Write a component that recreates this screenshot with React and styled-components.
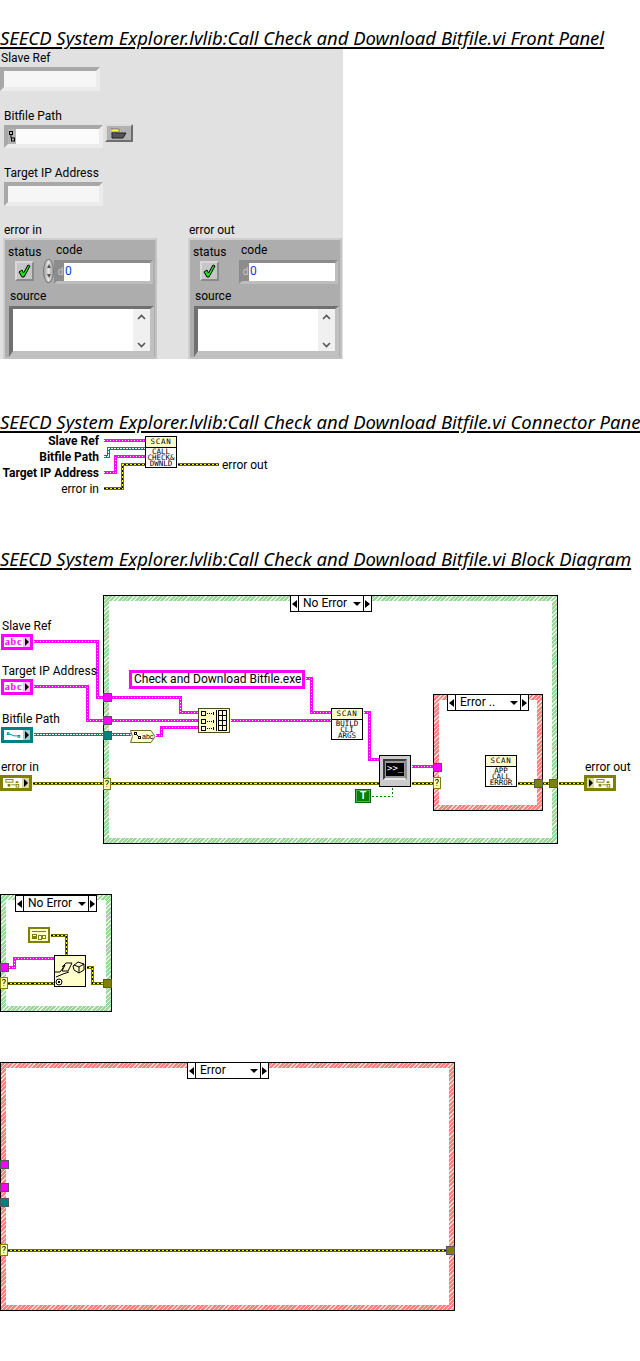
import React from 'react';
import styled, { createGlobalStyle, css } from 'styled-components';

const GlobalStyle = createGlobalStyle`
  html, body {
    margin: 0;
    padding: 0;
    background: #fff;
    font-family: Roboto, 'Noto Sans', sans-serif;
    color: #000;
  }
`;

const PINK = '#ff00ff';
const TEAL = '#008080';
const OLIVE = '#808000';

const place = css`
  position: absolute;
  left: ${(p) => p.$x}px;
  top: ${(p) => p.$y}px;
`;

const Page = styled.div`
  width: 640px;
  height: 1361px;
  overflow: hidden;
`;

const Title = styled.h2`
  margin: ${(p) => p.$gap}px 0 0;
  font-family: 'Noto Sans', sans-serif;
  font-size: 18.5px;
  line-height: 20px;
  font-weight: 400;
  font-style: italic;
  white-space: nowrap;
  text-decoration: underline;
  text-decoration-thickness: 2px;
  text-underline-offset: 2px;
`;

/* ---- front panel ---- */

const Panel = styled.section`
  width: 343px;
  height: 311px;
  background: #e1e1e1;
  overflow: hidden;
`;

const Field = styled.div`
  margin: ${(p) => p.$top}px 0 0 ${(p) => p.$left}px;
  display: flex;
  flex-direction: column;
`;

const Label = styled.span`
  display: block;
  font-size: 12px;
  line-height: 17px;
  height: 17px;
  white-space: nowrap;
  margin-left: ${(p) => p.$left || 0}px;
`;

const InputRow = styled.div`
  display: flex;
  align-items: flex-start;
  gap: 2px;
`;

const Recessed = styled.div`
  box-sizing: border-box;
  width: ${(p) => p.$w}px;
  height: ${(p) => p.$h}px;
  border: 4px solid;
  border-color: #a8a8a8 #ececec #ececec #a8a8a8;
  background: #f6f6f6;
  display: flex;
`;

const PathTag = styled.div`
  width: 8px;
  background: #b4b4b4;
  display: flex;
  align-items: center;
  justify-content: center;
`;

const PathText = styled.div`
  flex: 1;
  background: #fbfbfb;
`;

const BrowseButton = styled.button`
  box-sizing: border-box;
  width: 28px;
  height: 18px;
  margin-top: -1px;
  padding: 0;
  border: 2px solid;
  border-color: #dcdcdc #6e6e6e #6e6e6e #dcdcdc;
  background: #b2b2b2;
  display: flex;
  align-items: center;
  justify-content: center;
`;

const ClusterRow = styled.div`
  margin: 16px 0 0 3px;
  display: flex;
  gap: 31px;
`;

const ClusterColumn = styled.div`
  display: flex;
  flex-direction: column;
`;

const Cluster = styled.div`
  box-sizing: border-box;
  width: 154px;
  height: 121px;
  margin-top: -1px;
  border: 2px solid;
  border-color: #cfcfcf #c2c2c2 #c2c2c2 #cfcfcf;
  background: #adadad;
`;

const ClusterTop = styled.div`
  display: flex;
  height: 48px;
`;

const StatusColumn = styled.div`
  width: 38px;
  padding: 4px 0 0 3px;
  box-sizing: border-box;
  display: flex;
  flex-direction: column;
`;

const SpinnerSlot = styled.div`
  width: 11px;
  padding-top: 19px;
  flex: none;
`;

const CodeColumn = styled.div`
  padding-top: 2px;
  display: flex;
  flex-direction: column;
`;

const StatusButton = styled.div`
  box-sizing: border-box;
  width: 19px;
  height: 20px;
  margin-left: 7px;
  border: 2px solid;
  border-color: #d8d8d8 #8a8a8a #8a8a8a #d8d8d8;
  background: #c6c6c6;
  display: flex;
  align-items: center;
  justify-content: center;
`;

const Spinner = styled.div`
  width: 11px;
  height: 24px;
  border: 1px solid #7a7a7a;
  border-radius: 50%;
  background: linear-gradient(90deg, #a0a0a0, #e4e4e4 50%, #a0a0a0);
  display: flex;
  flex-direction: column;
  align-items: center;
  justify-content: space-between;
  padding: 4px 0;
  box-sizing: border-box;
`;

const SpinArrow = styled.i`
  width: 0;
  height: 0;
  border-left: 2px solid transparent;
  border-right: 2px solid transparent;
  ${(p) => (p.$down ? 'border-top: 4px solid #555;' : 'border-bottom: 4px solid #555;')}
`;

const NumericBox = styled.div`
  box-sizing: border-box;
  width: 99px;
  height: 24px;
  margin-top: 1px;
  border: 3px solid;
  border-color: #8c8c8c #bdbdbd #bdbdbd #8c8c8c;
  display: flex;
`;

const Radix = styled.span`
  width: 7px;
  background: #8c8c8c;
  color: #c9c9c9;
  font-size: 10px;
  line-height: 17px;
  text-align: center;
`;

const NumericValue = styled.span`
  flex: 1;
  background: #fff;
  color: #0a3ccf;
  font-size: 12px;
  line-height: 17px;
  padding-left: 1px;
`;

const SourceBox = styled.div`
  box-sizing: border-box;
  width: 145px;
  height: 51px;
  margin: 1px 0 0 4px;
  border: 3px solid;
  border-color: #707070 #c0c0c0 #c0c0c0 #707070;
  border-width: 3px 4px 6px 4px;
  background: #fff;
  display: flex;
  justify-content: flex-end;
`;

const ScrollBar = styled.div`
  width: 17px;
  background: #f0f0f0;
  display: flex;
  flex-direction: column;
  align-items: center;
  justify-content: space-between;
  padding: 5px 0 3px;
  box-sizing: border-box;
`;

const Chevron = ({ flip }) => (
  <svg width="9" height="6" viewBox="0 0 9 6">
    <polyline
      points={flip ? '1,1 4.5,4.5 8,1' : '1,5 4.5,1.5 8,5'}
      fill="none"
      stroke="#555"
      strokeWidth="1.6"
    />
  </svg>
);

const CheckMark = () => (
  <svg width="13" height="14" viewBox="0 0 13 14">
    <path
      d="M1 8 L4 6 L5.5 9 L10 1 L12 2 L6 13 L4 13 Z"
      fill="#1fe01f"
      stroke="#000"
      strokeWidth="1"
    />
  </svg>
);

const FolderIcon = () => (
  <svg width="16" height="11" viewBox="0 0 16 11">
    <path d="M1 3 L1 10 L12 10 L15 5 L5 5 L3 3 Z" fill="#555" stroke="#222" />
    <path d="M0 0 L1 0 L1 1 L8 1 L8 4 L1 4 L1 5 L0 5 Z" fill="#ffff20" stroke="#555" strokeWidth="0.6" />
  </svg>
);

const PathGlyph = () => (
  <svg width="6" height="11" viewBox="0 0 6 11">
    <rect x="0.5" y="0.5" width="3" height="3" fill="none" stroke="#000" />
    <line x1="2" y1="4" x2="2" y2="7" stroke="#000" />
    <rect x="2.5" y="7" width="3" height="3" fill="none" stroke="#000" />
  </svg>
);

const ErrorCluster = ({ title, control }) => (
  <ClusterColumn>
    <Label $left={1}>{title}</Label>
    <Cluster>
      <ClusterTop>
        <StatusColumn>
          <Label>status</Label>
          <StatusButton>
            <CheckMark />
          </StatusButton>
        </StatusColumn>
        <SpinnerSlot>
          {control && (
            <Spinner>
              <SpinArrow />
              <SpinArrow $down />
            </Spinner>
          )}
        </SpinnerSlot>
        <CodeColumn>
          <Label $left={2}>code</Label>
          <NumericBox>
            <Radix>d</Radix>
            <NumericValue>0</NumericValue>
          </NumericBox>
        </CodeColumn>
      </ClusterTop>
      <Label $left={5}>source</Label>
      <SourceBox>
        <ScrollBar>
          <Chevron />
          <Chevron flip />
        </ScrollBar>
      </SourceBox>
    </Cluster>
  </ClusterColumn>
);

/* ---- diagrams ---- */

const Canvas = styled.div`
  position: relative;
  width: 640px;
  height: ${(p) => p.$h}px;
  margin-top: ${(p) => p.$gap}px;
`;

const WireLayer = styled.svg`
  position: absolute;
  left: 0;
  top: 0;
  z-index: 3;
  pointer-events: none;
`;

const Trace = styled.polyline`
  fill: none;
  stroke: ${(p) => p.$c};
  stroke-width: ${(p) => p.$w}px;
  stroke-dasharray: ${(p) => p.$dash || 'none'};
  shape-rendering: crispEdges;
`;

const WIRES = {
  string: [
    { c: PINK, w: 3 },
    { c: '#fff', w: 1, dash: '1 2' },
  ],
  path: [
    { c: TEAL, w: 3 },
    { c: '#fff', w: 1, dash: '2 1' },
  ],
  error: [
    { c: '#6f6f00', w: 3 },
    { c: '#ffff00', w: 1 },
    { c: '#000', w: 1, dash: '2 2' },
  ],
  bool: [{ c: '#008000', w: 1, dash: '2 2' }],
};

const Wire = ({ kind, points }) =>
  WIRES[kind].map((layer, i) => (
    <Trace key={i} points={points} $c={layer.c} $w={layer.w} $dash={layer.dash} />
  ));

const Wires = ({ top, height, list }) => (
  <WireLayer width="640" height={height} viewBox={`0 ${top} 640 ${height}`}>
    <g transform="translate(0.5 0.5)">
      {list.map(([kind, points]) => (
        <Wire key={points} kind={kind} points={points} />
      ))}
    </g>
  </WireLayer>
);

const NodeLabel = styled.span`
  ${place}
  font-size: 12px;
  line-height: 16px;
  white-space: nowrap;
`;

const PaneLabels = styled.div`
  width: 99px;
  padding-top: 1px;
  display: flex;
  flex-direction: column;
  align-items: flex-end;
`;

const PaneLabel = styled.span`
  font-size: 12px;
  line-height: 16px;
  font-weight: ${(p) => (p.$bold ? 700 : 400)};
  white-space: nowrap;
`;

const IconNode = styled.div`
  ${place}
  z-index: 4;
  box-sizing: border-box;
  width: 32px;
  height: 32px;
  border: 1px solid #000;
  background: #fff;
  display: flex;
  flex-direction: column;
  font-family: 'DejaVu Sans Mono', 'Liberation Mono', monospace;
  font-size: 7.5px;
  line-height: 6px;
  text-align: center;
`;

const IconHead = styled.div`
  height: 10px;
  line-height: 10px;
  letter-spacing: 0.7px;
  background: #ffffcc;
  border-bottom: 1px solid #000;
  flex: none;
`;

const IconBody = styled.div`
  display: flex;
  flex-direction: column;
  justify-content: center;
  flex: 1;
  white-space: nowrap;
`;

const ScanNode = ({ x, y, lines }) => (
  <IconNode $x={x} $y={y}>
    <IconHead>SCAN</IconHead>
    <IconBody>
      {lines.map((line) => (
        <div key={line}>{line}</div>
      ))}
    </IconBody>
  </IconNode>
);

const CaseFrame = styled.div`
  ${place}
  z-index: 1;
  box-sizing: border-box;
  width: ${(p) => p.$w}px;
  height: ${(p) => p.$h}px;
  border: 1px solid #000;
  padding: 5px;
  background: repeating-linear-gradient(
    -45deg,
    ${(p) => (p.$error ? '#ff8080' : '#9ad89a')} 0 2px,
    ${(p) => (p.$error ? '#ffd8d8' : '#e8f6e8')} 2px 3px
  );
`;

const CaseInner = styled.div`
  width: 100%;
  height: 100%;
  background: #fff;
`;

const Selector = styled.div`
  ${place}
  z-index: 2;
  box-sizing: border-box;
  width: 82px;
  height: 17px;
  border: 1px solid #000;
  background: #fff;
  display: flex;
  font-size: 12px;
  line-height: 15px;
`;

const SelectorStep = styled.div`
  width: 7px;
  flex: none;
  display: flex;
  align-items: center;
  justify-content: center;
  ${(p) => (p.$right ? 'border-left: 1px solid #000;' : 'border-right: 1px solid #000;')}
`;

const StepArrow = styled.i`
  width: 0;
  height: 0;
  border-top: 4px solid transparent;
  border-bottom: 4px solid transparent;
  ${(p) => (p.$right ? 'border-left: 5px solid #000;' : 'border-right: 5px solid #000;')}
`;

const SelectorText = styled.div`
  flex: 1;
  display: flex;
  align-items: center;
  justify-content: space-between;
  padding: 0 2px 0 4px;
  white-space: nowrap;
`;

const DropArrow = styled.i`
  width: 0;
  height: 0;
  border-left: 4px solid transparent;
  border-right: 4px solid transparent;
  border-top: 4px solid #000;
`;

const CaseSelector = ({ x, y, text }) => (
  <Selector $x={x} $y={y}>
    <SelectorStep>
      <StepArrow />
    </SelectorStep>
    <SelectorText>
      {text}
      <DropArrow />
    </SelectorText>
    <SelectorStep $right>
      <StepArrow $right />
    </SelectorStep>
  </Selector>
);

const Tunnel = styled.div`
  ${place}
  z-index: 5;
  box-sizing: border-box;
  width: 9px;
  height: 9px;
  background: ${(p) => p.$c};
  border: 1px solid ${(p) => p.$edge || '#555'};
`;

const CaseTerminal = styled.div`
  ${place}
  z-index: 5;
  box-sizing: border-box;
  width: 8px;
  height: 12px;
  background: #ffffb0;
  border: 1px solid #808000;
  font-size: 9px;
  line-height: 10px;
  text-align: center;
`;

const LabeledTerminal = styled.div`
  ${place}
  z-index: 4;
  display: flex;
  flex-direction: column;
`;

const TerminalLabel = styled.span`
  font-size: 12px;
  line-height: 16px;
  margin-left: 1px;
  white-space: nowrap;
`;

const TerminalBox = styled.div`
  box-sizing: border-box;
  width: 32px;
  height: 16px;
  border: 3px solid ${(p) => p.$c};
  background: #fff;
  display: flex;
  flex-direction: ${(p) => (p.$indicator ? 'row-reverse' : 'row')};
`;

const TerminalFace = styled.div`
  flex: 1;
  display: flex;
  align-items: center;
  justify-content: center;
  font-family: 'Liberation Serif', serif;
  font-size: 10px;
  font-weight: 700;
  letter-spacing: 0.8px;
  line-height: 8px;
  color: ${(p) => p.$c};
`;

const TerminalFlap = styled.div`
  width: 7px;
  background: ${(p) => p.$tint};
  display: flex;
  align-items: center;
  justify-content: center;
`;

const FlapArrow = styled.i`
  width: 0;
  height: 0;
  border-top: 4px solid transparent;
  border-bottom: 4px solid transparent;
  border-left: 4px solid #000;
`;

const Terminal = ({ x, y, label, c, tint, indicator, children }) => (
  <LabeledTerminal $x={x} $y={y}>
    <TerminalLabel>{label}</TerminalLabel>
    <TerminalBox $c={c} $indicator={indicator}>
      <TerminalFace $c={c}>{children}</TerminalFace>
      <TerminalFlap $tint={tint}>
        <FlapArrow />
      </TerminalFlap>
    </TerminalBox>
  </LabeledTerminal>
);

const ClusterGlyph = () => (
  <svg width="16" height="9" viewBox="0 0 18 9">
    <rect x="1" y="0" width="8" height="3" fill="none" stroke="#808000" />
    <rect x="3" y="5" width="3" height="3" fill="#808000" />
    <line x1="7" y1="6" x2="12" y2="6" stroke="#808000" />
    <rect x="12" y="2" width="3" height="2" fill="#808000" />
    <rect x="12.5" y="5.5" width="3" height="3" fill="none" stroke="#808000" />
  </svg>
);

const PathWireGlyph = () => (
  <svg width="16" height="8" viewBox="0 0 18 8">
    <rect x="1.5" y="1.5" width="2" height="2" fill="none" stroke={TEAL} />
    <line x1="4" y1="3" x2="9" y2="5" stroke={TEAL} />
    <line x1="9" y1="5" x2="13" y2="5" stroke={TEAL} />
    <rect x="13.5" y="4.5" width="2" height="2" fill="none" stroke={TEAL} />
  </svg>
);

const AbsoluteIcon = styled.svg`
  ${place}
  z-index: 4;
`;

const BuildArrayNode = ({ x, y }) => (
  <AbsoluteIcon $x={x} $y={y} width="32" height="25" viewBox="0 0 32 25">
    <rect x="0.5" y="0.5" width="31" height="24" fill="#ffffcc" stroke="#4a4a20" />
    {[3, 11, 18].map((t) => (
      <g key={t} stroke="#000" fill="none" shapeRendering="crispEdges">
        <rect x="3.5" y={t + 0.5} width="4" height="4" />
        <line x1="9" y1={t + 2.5} x2="16" y2={t + 2.5} strokeDasharray="1 1" />
        <line x1="15.5" y1={t + 1} x2="15.5" y2={t + 4} />
      </g>
    ))}
    <g stroke="#000" fill="none" shapeRendering="crispEdges">
      <line x1="18.5" y1="2" x2="18.5" y2="23" />
      <rect x="20.5" y="2.5" width="8" height="20" />
      <line x1="24.5" y1="3" x2="24.5" y2="22" />
      <line x1="21" y1="7.5" x2="28" y2="7.5" />
      <line x1="21" y1="12.5" x2="28" y2="12.5" />
      <line x1="21" y1="17.5" x2="28" y2="17.5" />
    </g>
  </AbsoluteIcon>
);

const PathToStringNode = ({ x, y }) => (
  <AbsoluteIcon $x={x} $y={y} width="26" height="13" viewBox="0 0 26 13">
    <polygon points="0.5,0.5 21,0.5 25,6.5 21,12.5 0.5,12.5 2.5,6.5" fill="#ffffcc" stroke="#6f6a30" />
    <rect x="4.5" y="2.5" width="2" height="2" fill="none" stroke="#000" />
    <line x1="7" y1="5" x2="9" y2="7" stroke="#000" />
    <rect x="8.5" y="6.5" width="2" height="2" fill="none" stroke="#000" />
    <text x="12" y="9" fontSize="7" fontFamily="Liberation Sans, sans-serif">abc</text>
  </AbsoluteIcon>
);

const StringConstant = styled.div`
  ${place}
  z-index: 4;
  box-sizing: border-box;
  width: 176px;
  height: 19px;
  border: 3px solid ${PINK};
  background: #fff;
  font-size: 12px;
  line-height: 13px;
  padding-left: 2px;
  white-space: nowrap;
`;

const ExecNode = styled.div`
  ${place}
  z-index: 4;
  box-sizing: border-box;
  width: 32px;
  height: 32px;
  border: 1px solid #000;
  background: #cbcbcb;
  padding: 3px 3px 6px;
`;

const ExecBezel = styled.div`
  box-sizing: border-box;
  height: 100%;
  border: 2px solid;
  border-color: #3a3a3a #8a8a8a #e8e8e8 #3a3a3a;
  background: #9a9a9a;
  padding: 2px 1px;
`;

const ExecScreen = styled.div`
  height: 100%;
  overflow: hidden;
  background: #000;
  color: #fff;
  font-family: 'DejaVu Sans Mono', monospace;
  font-size: 9px;
  line-height: 11px;
  padding-left: 1px;
  white-space: nowrap;
`;

const TrueConstant = styled.div`
  ${place}
  z-index: 4;
  box-sizing: border-box;
  width: 16px;
  height: 14px;
  border: 1px solid #006a00;
  background: #008000;
  color: #fff;
  box-shadow: inset 0 0 0 1px rgba(255, 255, 255, 0.35);
  font-family: 'Liberation Sans', sans-serif;
  font-weight: 700;
  font-size: 10px;
  line-height: 12px;
  text-align: center;
`;

const EnumConstant = ({ x, y }) => (
  <AbsoluteIcon $x={x} $y={y} width="22" height="16" viewBox="0 0 22 16">
    <rect x="1" y="1" width="20" height="14" fill="#ffffcc" stroke={OLIVE} strokeWidth="2" />
    <g shapeRendering="crispEdges">
      <rect x="4" y="4" width="14" height="1" fill={OLIVE} />
      <rect x="4" y="7" width="5" height="5" fill={OLIVE} />
      <rect x="5" y="8" width="3" height="1" fill="#ffffcc" />
      <rect x="10" y="8" width="3" height="4" fill="none" stroke={OLIVE} />
      <rect x="14.5" y="8.5" width="3" height="3" fill="none" stroke={OLIVE} />
    </g>
  </AbsoluteIcon>
);

const ErrorHandlerNode = ({ x, y }) => (
  <AbsoluteIcon $x={x} $y={y} width="32" height="32" viewBox="0 0 32 32">
    <rect x="0.5" y="0.5" width="31" height="31" fill="#ffffcc" stroke="#000" />
    <g fill="none" stroke="#000">
      <path d="M1 17 L6 17 L11 10 L8 16 L14 16 L18 8 L12 8 L8 12" />
      <path d="M2 22 L9 19 L15 17" />
      <path d="M19 11 L24 7 L30 9 L30 15 L25 18 L20 15 Z M20 10 L25 12 L30 9 M25 12 L25 18" />
      <circle cx="5" cy="27" r="3" />
    </g>
    <rect x="4" y="26" width="2" height="2" fill="#000" />
  </AbsoluteIcon>
);

const MAIN_WIRES = [
  ['string', '33,641 97,641 97,697 180,697 180,712 198,712'],
  ['string', '33,686 87,686 87,720 198,720'],
  ['path', '33,734 130,734'],
  ['string', '155,735 161,735 161,727 198,727'],
  ['string', '230,720 331,720'],
  ['string', '305,678 311,678 311,712 331,712'],
  ['string', '363,712 369,712 369,759 379,759'],
  ['string', '411,766 433,766'],
  ['error', '32,783 379,783'],
  ['error', '411,783 433,783'],
  ['error', '517,783 549,783'],
  ['error', '558,783 584,783'],
  ['bool', '371,796 392,796 392,787'],
];

const SECOND_WIRES = [
  ['error', '50,935 66,935 66,955'],
  ['string', '8,967 14,967 14,958 54,958'],
  ['error', '7,983 54,983'],
  ['error', '86,967 92,967 92,983 103,983'],
];

const PANE_WIRES = [
  ['string', '103,440 145,440'],
  ['path', '103,456 108,456 108,448 145,448'],
  ['string', '103,472 115,472 115,456 145,456'],
  ['error', '103,488 122,488 122,464 145,464'],
  ['error', '177,464 218,464'],
];

const App = () => (
  <Page>
    <GlobalStyle />
    <Title $gap={28}>SEECD System Explorer.lvlib:Call Check and Download Bitfile.vi Front Panel</Title>
    <Panel>
      <Field $top={2} $left={0}>
        <Label $left={1}>Slave Ref</Label>
        <Recessed $w={100} $h={24} />
      </Field>
      <Field $top={17} $left={4}>
        <Label>Bitfile Path</Label>
        <InputRow>
          <Recessed $w={99} $h={23}>
            <PathTag>
              <PathGlyph />
            </PathTag>
            <PathText />
          </Recessed>
          <BrowseButton>
            <FolderIcon />
          </BrowseButton>
        </InputRow>
      </Field>
      <Field $top={17} $left={4}>
        <Label>Target IP Address</Label>
        <Recessed $w={99} $h={24} />
      </Field>
      <ClusterRow>
        <ErrorCluster title="error in" control />
        <ErrorCluster title="error out" />
      </ClusterRow>
    </Panel>

    <Title $gap={53}>SEECD System Explorer.lvlib:Call Check and Download Bitfile.vi Connector Pane</Title>
    <Canvas $h={70} $gap={0}>
      <Wires top={432} height={70} list={PANE_WIRES} />
      <PaneLabels>
        <PaneLabel $bold>Slave Ref</PaneLabel>
        <PaneLabel $bold>Bitfile Path</PaneLabel>
        <PaneLabel $bold>Target IP Address</PaneLabel>
        <PaneLabel>error in</PaneLabel>
      </PaneLabels>
      <NodeLabel $x={222} $y={25}>error out</NodeLabel>
      <ScanNode x={145} y={4} lines={['CALL', 'CHECK&', 'DWNLD']} />
    </Canvas>

    <Title $gap={47}>SEECD System Explorer.lvlib:Call Check and Download Bitfile.vi Block Diagram</Title>
    <Canvas $h={260} $gap={21}>
      <Wires top={590} height={260} list={MAIN_WIRES} />
      <Terminal x={1} y={28} label="Slave Ref" c={PINK} tint="#ffc0ff">abc</Terminal>
      <Terminal x={1} y={73} label="Target IP Address" c={PINK} tint="#ffc0ff">abc</Terminal>
      <Terminal x={1} y={121} label="Bitfile Path" c={TEAL} tint="#a0d0d0"><PathWireGlyph /></Terminal>
      <Terminal x={0} y={169} label="error in" c={OLIVE} tint="#d8d8a0"><ClusterGlyph /></Terminal>

      <CaseFrame $x={103} $y={5} $w={455} $h={249}>
        <CaseInner />
      </CaseFrame>
      <CaseSelector x={290} y={5} text="No Error" />
      <Tunnel $x={103} $y={103} $c={PINK} />
      <Tunnel $x={103} $y={126} $c={PINK} />
      <Tunnel $x={103} $y={141} $c={TEAL} />
      <CaseTerminal $x={103} $y={188}>?</CaseTerminal>

      <StringConstant $x={129} $y={80}>Check and Download Bitfile.exe</StringConstant>
      <PathToStringNode x={130} y={140} />
      <BuildArrayNode x={198} y={118} />
      <ScanNode x={331} y={118} lines={['BUILD', 'CLI', 'ARGS']} />
      <ExecNode $x={379} $y={165}>
        <ExecBezel>
          <ExecScreen>&gt;&gt;_</ExecScreen>
        </ExecBezel>
      </ExecNode>
      <TrueConstant $x={355} $y={199}>T</TrueConstant>

      <CaseFrame $x={433} $y={104} $w={110} $h={117} $error>
        <CaseInner />
      </CaseFrame>
      <CaseSelector x={447} y={104} text="Error .." />
      <Tunnel $x={433} $y={173} $c={PINK} />
      <CaseTerminal $x={433} $y={187}>?</CaseTerminal>
      <Tunnel $x={534} $y={189} $c={OLIVE} />
      <Tunnel $x={549} $y={189} $c={OLIVE} />
      <ScanNode x={485} y={165} lines={['APP', 'CALL', 'ERROR']} />

      <Terminal x={584} y={169} label="error out" c={OLIVE} tint="#d8d8a0" indicator><ClusterGlyph /></Terminal>
    </Canvas>

    <Canvas $h={130} $gap={40}>
      <Wires top={890} height={130} list={SECOND_WIRES} />
      <CaseFrame $x={0} $y={4} $w={112} $h={118}>
        <CaseInner />
      </CaseFrame>
      <CaseSelector x={15} y={5} text="No Error" />
      <EnumConstant x={28} y={37} />
      <ErrorHandlerNode x={54} y={65} />
      <Tunnel $x={0} $y={73} $c={PINK} />
      <CaseTerminal $x={0} $y={87}>?</CaseTerminal>
      <Tunnel $x={103} $y={89} $c={OLIVE} />
    </Canvas>

    <Canvas $h={260} $gap={40}>
      <Wires top={1060} height={260} list={[['error', '7,1250 446,1250']]} />
      <CaseFrame $x={0} $y={2} $w={455} $h={249} $error>
        <CaseInner />
      </CaseFrame>
      <CaseSelector x={187} y={2} text="Error" />
      <Tunnel $x={0} $y={100} $c={PINK} />
      <Tunnel $x={0} $y={123} $c={PINK} />
      <Tunnel $x={0} $y={138} $c={TEAL} />
      <CaseTerminal $x={0} $y={184}>?</CaseTerminal>
      <Tunnel $x={446} $y={186} $c={OLIVE} />
    </Canvas>
  </Page>
);

export default App;
